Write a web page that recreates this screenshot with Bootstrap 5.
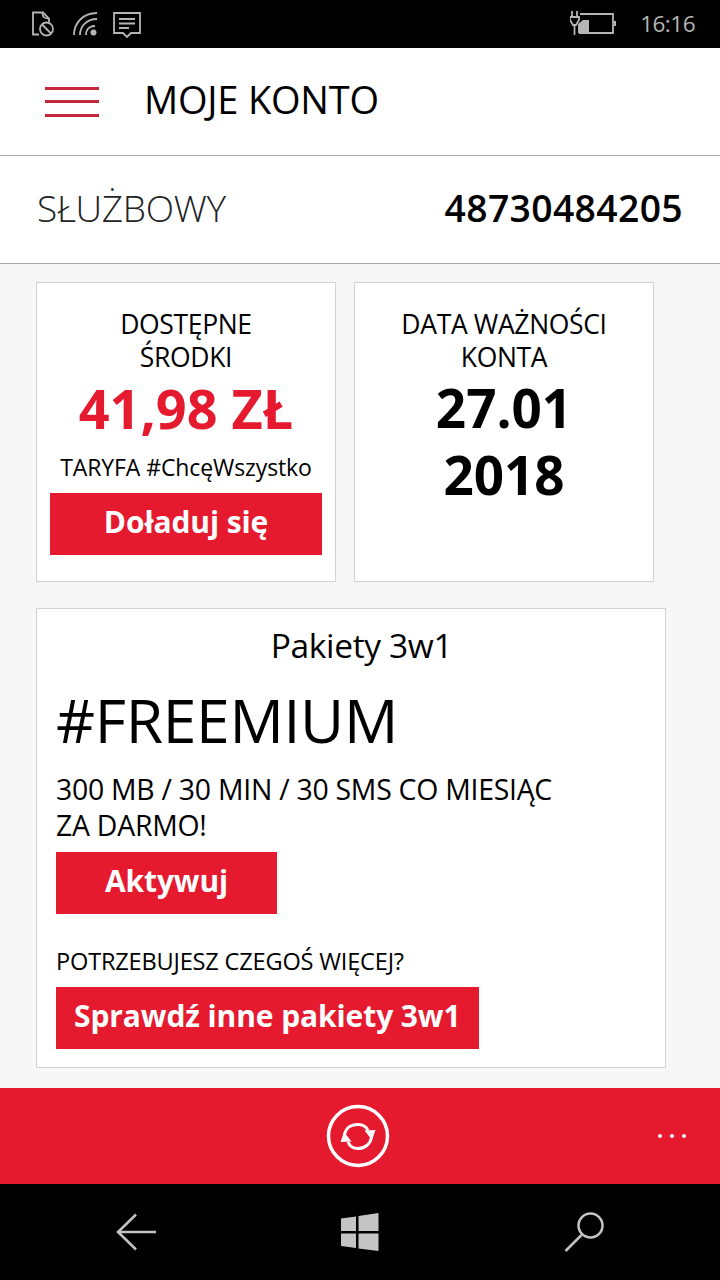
<!DOCTYPE html>
<html lang="pl">
<head>
  <meta charset="UTF-8">
  <title>Moje konto</title>
  <link href="https://cdn.jsdelivr.net/npm/bootstrap@5.3.3/dist/css/bootstrap.min.css" rel="stylesheet">
  <style>
    body { font-family: "Open Sans", "Noto Sans", sans-serif; background: #000; color: #000; }
    .app-screen { width: 720px; height: 1280px; overflow: hidden; }
    .status-bar { height: 48px; background: #000; color: #b5b5b5; padding: 0 25px 0 31px; }
    .status-time { font-size: 22.5px; letter-spacing: -0.5px; line-height: 48px; }
    .battery-gap { gap: 24px; }
    .wifi-icon { margin-left: 18px; }
    .msg-icon { margin-left: 14px; margin-top: 3px; }
    .top-head { height: 108px; background: #fff; border-bottom: 1px solid #a8a8a8; padding-left: 45px; gap: 45px; }
    .top-title { font-size: 38px; line-height: 1; letter-spacing: -0.2px; margin-top: -6px; }
    .burger { width: 54px; height: 30px; }
    .burger span { height: 3px; background: #c8283c; display: block; }
    .account-row { height: 108px; background: #fff; border-bottom: 1px solid #a8a8a8; padding: 0 37px 4px; }
    .account-type { font-size: 37px; font-weight: 300; letter-spacing: -0.3px; color: #222; }
    .account-num { font-size: 37.3px; font-weight: 600; letter-spacing: 0.35px; }
    .content-area { height: 824px; background: #f7f7f7; padding: 18px 0 0 36px; }
    .tile-gap { column-gap: 18px; }
    .tile { background: #fff; border: 1px solid #d2d2d2; border-radius: 0; }
    .tile-small { width: 300px; height: 300px; padding: 25px 13px 0; }
    .tile-label { font-size: 26.5px; line-height: 33px; letter-spacing: -0.35px; }
    .tile-red { font-size: 54px; line-height: 68px; font-weight: 700; color: #e51a2f; }
    .tile-big { font-size: 53px; line-height: 67px; font-weight: 700; }
    .tariff { font-size: 23px; line-height: 30px; margin-top: 10px; letter-spacing: -0.1px; }
    .btn-red { background: #e51a2f; color: #fff; border: 0; border-radius: 0; font-weight: 700; height: 62px; font-size: 30px; line-height: 1; padding: 0 18px 4px; letter-spacing: -0.1px; }
    .btn-red:hover { background: #e51a2f; color: #fff; }
    .btn-top { margin-top: 11px; }
    .btn-activate { width: 221px; margin-top: 9px; }
    .btn-others { margin-top: 11px; }
    .tile-wide { width: 630px; height: 460px; margin-top: 26px; padding: 17px 19px 0; }
    .pack-title { font-size: 33.5px; line-height: 38px; letter-spacing: -0.35px; padding-left: 21px; }
    .pack-name { font-size: 60.5px; line-height: 70px; margin-top: 21px; letter-spacing: -0.3px; }
    .pack-desc { font-size: 28.4px; line-height: 36px; margin-top: 16px; letter-spacing: -0.25px; }
    .pack-more { font-size: 23.6px; line-height: 30px; margin-top: 32px; letter-spacing: -0.2px; }
    .action-bar { height: 96px; background: #e51a2f; padding-right: 4px; }
    .more-dots { right: 34px; top: 46px; gap: 8px; }
    .more-dots span { width: 4px; height: 4px; background: #fff; border-radius: 50%; display: block; }
    .nav-bar { height: 96px; background: #000; padding: 0 116px; }
  </style>
</head>
<body class="m-0">
  <div class="app-screen d-flex flex-column">

    <div class="status-bar d-flex align-items-center justify-content-between">
      <div class="d-flex align-items-center">
        <svg width="24" height="26" viewBox="0 0 24 26" fill="none" stroke="#b5b5b5" stroke-width="1.800">
          <path d="M8 23.500H2V1.500h10l6 6v3.500"/><path d="M11.500 1.500c0 4 1 6 6.500 6"/>
          <circle cx="15.500" cy="18" r="6.500"/><path d="M11 13.500l9 9"/>
        </svg>
        <svg class="wifi-icon" width="25" height="26" viewBox="0 0 25 26" fill="none" stroke="#b5b5b5" stroke-width="1.800">
          <path d="M1 24C1 12 10 2 24 2"/><path d="M7 24C7 15 14 8 24 8"/><path d="M13 24C13 18 17 15 22 15"/>
          <circle cx="20.500" cy="21.500" r="3" fill="#b5b5b5" stroke="none"/>
        </svg>
        <svg class="msg-icon" width="30" height="28" viewBox="0 0 30 28" fill="none" stroke="#b5b5b5" stroke-width="1.800">
          <path d="M2 1h26v20H19l-4 4-4-4H2z"/><path d="M7 7h16M7 11.500h16M7 16h10"/>
        </svg>
      </div>
      <div class="d-flex align-items-center battery-gap">
        <svg width="46" height="26" viewBox="0 0 46 26" fill="none" stroke="#b5b5b5" stroke-width="1.800">
          <path d="M2 0v6M7 0v6M0 6h9v3l-3 5H3L0 9zM4.500 14v10"/>
          <path d="M10 3h33v19H9"/>
          <path d="M8 22v-9l5-4h6v13z" fill="#b5b5b5" stroke="none"/>
          <path d="M45 10v5" stroke-width="2.500"/>
        </svg>
        <span class="status-time">16:16</span>
      </div>
    </div>

    <div class="top-head d-flex align-items-center">
      <div class="burger d-flex flex-column justify-content-between"><span></span><span></span><span></span></div>
      <div class="top-title">MOJE KONTO</div>
    </div>

    <div class="account-row d-flex align-items-center justify-content-between">
      <div class="account-type">SŁUŻBOWY</div>
      <div class="account-num">48730484205</div>
    </div>

    <div class="content-area">
      <div class="d-flex tile-gap">
        <div class="tile tile-small text-center d-flex flex-column align-items-center">
          <div class="tile-label">DOSTĘPNE<br>ŚRODKI</div>
          <div class="tile-red">41,98 ZŁ</div>
          <div class="tariff">TARYFA #ChcęWszystko</div>
          <button type="button" class="btn btn-red w-100 btn-top">Doładuj się</button>
        </div>
        <div class="tile tile-small text-center">
          <div class="tile-label">DATA WAŻNOŚCI<br>KONTA</div>
          <div class="tile-big">27.01</div>
          <div class="tile-big">2018</div>
        </div>
      </div>
      <div class="tile tile-wide">
        <div class="pack-title text-center">Pakiety 3w1</div>
        <div class="pack-name">#FREEMIUM</div>
        <div class="pack-desc">300 MB / 30 MIN / 30 SMS CO MIESIĄC<br>ZA DARMO!</div>
        <button type="button" class="btn btn-red d-block btn-activate">Aktywuj</button>
        <div class="pack-more">POTRZEBUJESZ CZEGOŚ WIĘCEJ?</div>
        <button type="button" class="btn btn-red d-block btn-others">Sprawdź inne pakiety 3w1</button>
      </div>
    </div>

    <div class="action-bar position-relative d-flex align-items-center justify-content-center">
      <svg width="64" height="64" viewBox="0 0 64 64" fill="none" stroke="#fff">
        <circle cx="32" cy="32" r="29.500" stroke-width="3.500"/>
        <path d="M18.500 32C19 24 25 20.500 32 20.500c4 0 8 1.500 10 6" stroke-width="3"/>
        <path d="M45.500 32c-.5 8-6.500 12.500-13.500 12.500-4 0-8-1.500-10-6.500" stroke-width="3"/>
        <path d="M38.500 26.500l11-.5-3.500 10z" fill="#fff" stroke="none"/>
        <path d="M25.500 37.500l-11 .5 3.500-10z" fill="#fff" stroke="none"/>
      </svg>
      <div class="more-dots position-absolute d-flex"><span></span><span></span><span></span></div>
    </div>

    <div class="nav-bar d-flex align-items-center justify-content-between">
      <svg width="40" height="38" viewBox="0 0 40 38" fill="none" stroke="#c4c4c4" stroke-width="2.500">
        <path d="M20 1.500L2 19 20 36.500M2 19H40"/>
      </svg>
      <svg width="38" height="38" viewBox="0 0 38 38" fill="#c4c4c4">
        <path d="M0 5.500L15 3.500V18H0zM17.500 3L37.500 0V18H17.500zM0 20.500H15V35L0 33zM17.500 20.500H37.500V38L17.500 35.500z"/>
      </svg>
      <svg width="40" height="40" viewBox="0 0 40 40" fill="none" stroke="#c4c4c4" stroke-width="2.500">
        <circle cx="26.500" cy="13.500" r="12"/><path d="M17.500 23L1.500 39"/>
      </svg>
    </div>
  </div>
</body>
</html>
